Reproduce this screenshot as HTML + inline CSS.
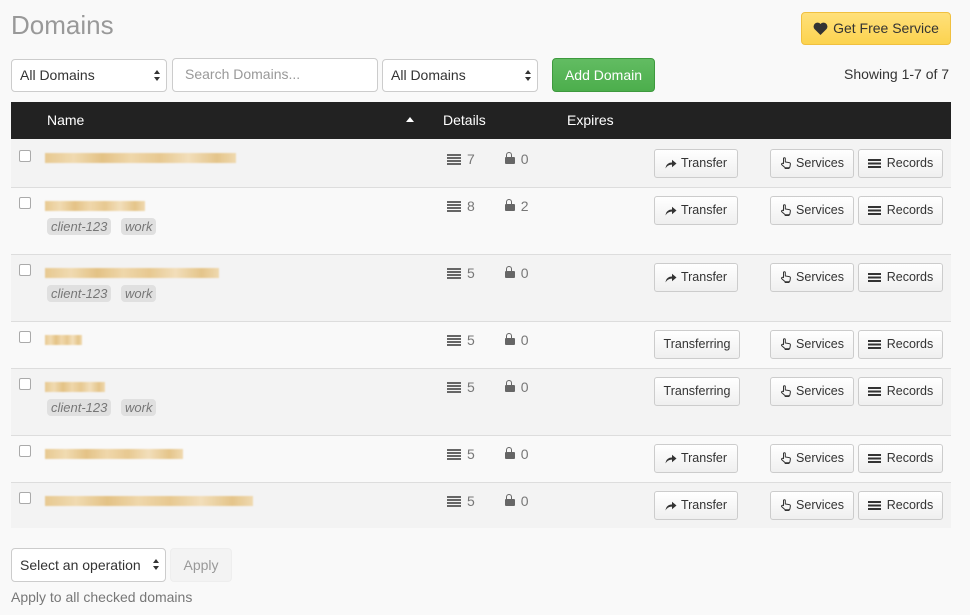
<!DOCTYPE html>
<html><head><meta charset="utf-8"><style>
*{box-sizing:border-box;margin:0;padding:0}
body{width:970px;height:615px;background:#f9f9f9;font-family:"Liberation Sans",Arial,sans-serif;font-size:14px;color:#333;position:relative;overflow:hidden}
.a{position:absolute}
h1{position:absolute;left:11px;top:10px;font-size:26px;font-weight:normal;color:#999}
.sel,.inp{position:absolute;height:33px;border:1px solid #ccc;border-radius:4px;background:#fff;padding:0 8px;line-height:31px;font-size:14px}
.sel:after{content:"";position:absolute;right:6px;top:10px;border:3.5px solid transparent;border-bottom:4px solid #333;border-top:none}
.sel:before{content:"";position:absolute;right:6px;top:17px;border:3.5px solid transparent;border-top:4px solid #333;border-bottom:none}
.btn{position:absolute;height:29px;border:1px solid #ccc;border-radius:3px;background:linear-gradient(#fff,#efefef);font-size:12.5px;line-height:27px;text-align:center;color:#333}
.btn svg{vertical-align:-2px;margin-right:4px}
.row{position:absolute;left:11px;width:940px;border-top:1px solid #ddd}
.cb{position:absolute;left:8px;width:12px;height:12px;border:1px solid #aaa;border-radius:2px;background:#fff}
.nm{position:absolute;left:34px;height:10px;background:linear-gradient(90deg,#e6c486,#f0d8aa 15%,#e2bd7a 30%,#efd4a3 45%,#e6c486 60%,#f2dcb4 75%,#e3c07f 90%,#efd6a8);filter:blur(0.8px);opacity:.9}
.tag{position:absolute;top:30px;height:17px;background:#e0e0e0;border-radius:4px;color:#777;font-style:italic;font-size:13px;line-height:17px;padding:0 4px}
.det{position:absolute;top:12px;left:436px;color:#777;font-size:14px}
.ri{display:inline-block;width:14px;height:11px;background:repeating-linear-gradient(#666 0 2px,transparent 2px 3px);vertical-align:-1px;margin-right:6px}
.lk{display:inline-block;width:10px;height:7px;background:#666;border-radius:1px;position:relative;margin:0 6px 0 30px;vertical-align:0}
.lk:before{content:"";position:absolute;left:1.5px;top:-5px;width:4px;height:5px;border:1.5px solid #666;border-bottom:none;border-radius:4px 4px 0 0}
.rec{display:inline-block;width:13px;height:9px;background:repeating-linear-gradient(#333 0 2px,transparent 2px 3.5px);vertical-align:-1px;margin-right:6px}
</style></head><body>
<h1>Domains</h1>
<div class="a" style="left:801px;top:12px;width:150px;height:33px;border:1px solid #f0c040;border-radius:4px;background:linear-gradient(#ffe07a,#fcd34f);font-size:14px;line-height:31px;text-align:center;color:#333"><svg width="15" height="13" viewBox="0 0 16 14" style="vertical-align:-2px;margin-right:5px"><path d="M8 14 L1.5 7.5 A3.8 3.8 0 0 1 8 2.2 A3.8 3.8 0 0 1 14.5 7.5 Z" fill="#333"/></svg>Get Free Service</div>
<div class="sel" style="left:11px;top:59px;width:156px">All Domains</div>
<div class="inp" style="left:172px;top:58px;width:206px;height:34px;color:#999;padding-left:12px">Search Domains...</div>
<div class="sel" style="left:382px;top:59px;width:156px">All Domains</div>
<div class="a" style="left:552px;top:58px;width:103px;height:34px;border:1px solid #3e9a3e;border-radius:4px;background:linear-gradient(#62bc62,#4cae4c);color:#fff;font-size:14px;line-height:32px;text-align:center">Add Domain</div>
<div class="a" style="left:844px;top:66px;font-size:14px">Showing 1-7 of 7</div>
<div class="a" style="left:11px;top:102px;width:940px;height:37px;background:#222;color:#fff;font-size:14px;line-height:37px">
<span class="a" style="left:36px">Name</span>
<span class="a" style="left:395px;top:15px;border:4px solid transparent;border-bottom:5px solid #fff;border-top:none"></span>
<span class="a" style="left:432px">Details</span>
<span class="a" style="left:556px">Expires</span>
</div>

<svg width="0" height="0" style="position:absolute"><defs>
<symbol id="tr" viewBox="0 0 12 10"><path d="M0.5 9.5 C1 5 4 3.5 7 3.5 V0.8 L11.5 4.5 L7 8.2 V5.6 C4.5 5.6 2.2 6.5 0.5 9.5 Z" fill="#333"/></symbol>
<symbol id="hd" viewBox="0 0 12 12"><path d="M3.5 6.5 V1.6 A0.9 0.9 0 0 1 5.3 1.6 V5 L9.2 5.6 A1.3 1.3 0 0 1 10.4 7 L10 9.5 A1.6 1.6 0 0 1 8.4 10.8 H5.2 L1.8 7.8 A0.9 0.9 0 0 1 3.2 6.6 Z M5.2 10.8 V11.8 H9 V10.8" fill="none" stroke="#333" stroke-width="1"/></symbol>
</defs></svg>

<div class="row" style="top:139px;height:48px;background:#f3f3f3;border-top:none">
<div class="cb" style="top:11px"></div><div class="nm" style="top:14px;width:191px"></div>
<div class="det"><span class="ri"></span>7<span class="lk"></span>0</div>
<div class="btn" style="left:643px;top:10px;width:84px"><svg width="12" height="10"><use href="#tr"/></svg>Transfer</div>
<div class="btn" style="left:759px;top:10px;width:84px"><svg width="12" height="12"><use href="#hd"/></svg>Services</div>
<div class="btn" style="left:847px;top:10px;width:85px"><span class="rec"></span>Records</div>
</div>
<div class="row" style="top:187px;height:67px;background:#f9f9f9">
<div class="cb" style="top:9px"></div><div class="nm" style="top:13px;width:100px"></div>
<span class="tag" style="left:36px">client-123</span><span class="tag" style="left:110px">work</span>
<div class="det" style="top:10px"><span class="ri"></span>8<span class="lk"></span>2</div>
<div class="btn" style="left:643px;top:8px;width:84px"><svg width="12" height="10"><use href="#tr"/></svg>Transfer</div>
<div class="btn" style="left:759px;top:8px;width:84px"><svg width="12" height="12"><use href="#hd"/></svg>Services</div>
<div class="btn" style="left:847px;top:8px;width:85px"><span class="rec"></span>Records</div>
</div>
<div class="row" style="top:254px;height:67px;background:#f3f3f3">
<div class="cb" style="top:9px"></div><div class="nm" style="top:13px;width:174px"></div>
<span class="tag" style="left:36px">client-123</span><span class="tag" style="left:110px">work</span>
<div class="det" style="top:10px"><span class="ri"></span>5<span class="lk"></span>0</div>
<div class="btn" style="left:643px;top:8px;width:84px"><svg width="12" height="10"><use href="#tr"/></svg>Transfer</div>
<div class="btn" style="left:759px;top:8px;width:84px"><svg width="12" height="12"><use href="#hd"/></svg>Services</div>
<div class="btn" style="left:847px;top:8px;width:85px"><span class="rec"></span>Records</div>
</div>
<div class="row" style="top:321px;height:47px;background:#f9f9f9">
<div class="cb" style="top:9px"></div><div class="nm" style="top:13px;width:37px"></div>
<div class="det" style="top:10px"><span class="ri"></span>5<span class="lk"></span>0</div>
<div class="btn" style="left:643px;top:8px;width:86px">Transferring</div>
<div class="btn" style="left:759px;top:8px;width:84px"><svg width="12" height="12"><use href="#hd"/></svg>Services</div>
<div class="btn" style="left:847px;top:8px;width:85px"><span class="rec"></span>Records</div>
</div>
<div class="row" style="top:368px;height:67px;background:#f3f3f3">
<div class="cb" style="top:9px"></div><div class="nm" style="top:13px;width:60px"></div>
<span class="tag" style="left:36px">client-123</span><span class="tag" style="left:110px">work</span>
<div class="det" style="top:10px"><span class="ri"></span>5<span class="lk"></span>0</div>
<div class="btn" style="left:643px;top:8px;width:86px">Transferring</div>
<div class="btn" style="left:759px;top:8px;width:84px"><svg width="12" height="12"><use href="#hd"/></svg>Services</div>
<div class="btn" style="left:847px;top:8px;width:85px"><span class="rec"></span>Records</div>
</div>
<div class="row" style="top:435px;height:47px;background:#f9f9f9">
<div class="cb" style="top:9px"></div><div class="nm" style="top:13px;width:138px"></div>
<div class="det" style="top:10px"><span class="ri"></span>5<span class="lk"></span>0</div>
<div class="btn" style="left:643px;top:8px;width:84px"><svg width="12" height="10"><use href="#tr"/></svg>Transfer</div>
<div class="btn" style="left:759px;top:8px;width:84px"><svg width="12" height="12"><use href="#hd"/></svg>Services</div>
<div class="btn" style="left:847px;top:8px;width:85px"><span class="rec"></span>Records</div>
</div>
<div class="row" style="top:482px;height:46px;background:#f3f3f3">
<div class="cb" style="top:9px"></div><div class="nm" style="top:13px;width:208px"></div>
<div class="det" style="top:10px"><span class="ri"></span>5<span class="lk"></span>0</div>
<div class="btn" style="left:643px;top:8px;width:84px"><svg width="12" height="10"><use href="#tr"/></svg>Transfer</div>
<div class="btn" style="left:759px;top:8px;width:84px"><svg width="12" height="12"><use href="#hd"/></svg>Services</div>
<div class="btn" style="left:847px;top:8px;width:85px"><span class="rec"></span>Records</div>
</div>

<div class="sel" style="left:11px;top:548px;width:155px;height:34px;line-height:32px">Select an operation</div>
<div class="a" style="left:170px;top:548px;width:62px;height:34px;border-radius:4px;background:#f3f3f3;border:1px solid #eee;color:#999;line-height:32px;text-align:center">Apply</div>
<div class="a" style="left:11px;top:589px;color:#777;font-size:14px">Apply to all checked domains</div>
</body></html>
